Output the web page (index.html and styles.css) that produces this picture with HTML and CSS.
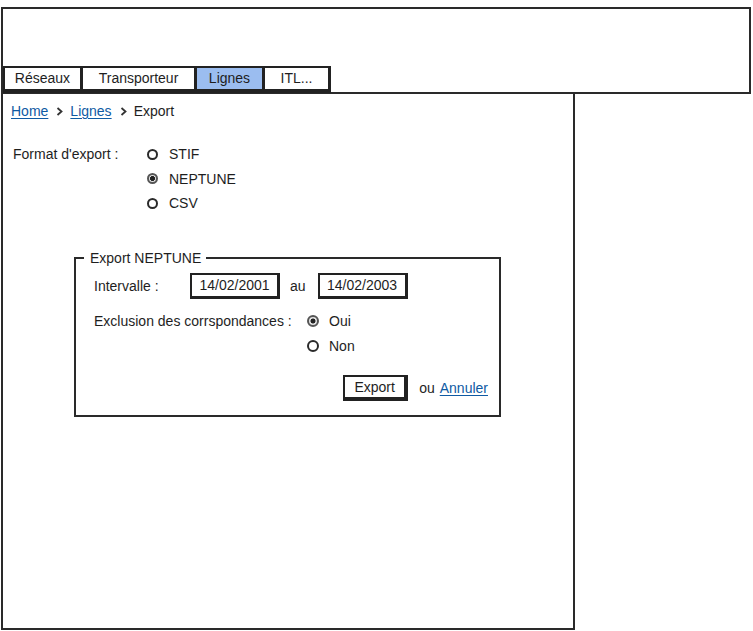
FILE: index.html
```html
<!DOCTYPE html>
<html lang="fr">
<head>
<meta charset="utf-8">
<title>Export NEPTUNE</title>
<link rel="stylesheet" href="styles.css">
</head>
<body>
<header class="top">
  <nav class="tabs">
    <span class="tab tab-w1">Réseaux</span>
    <span class="tab tab-w2">Transporteur</span>
    <span class="tab tab-w3 is-active">Lignes</span>
    <span class="tab tab-w4">ITL...</span>
  </nav>
</header>
<main class="panel">
  <div class="crumbs">
    <a class="link" href="#">Home</a>
    <svg class="chev" width="7" height="9" viewBox="0 0 7 9"><path d="M1.5 1 L5.5 4.5 L1.5 8" fill="none" stroke="#333" stroke-width="1.8"/></svg>
    <a class="link" href="#">Lignes</a>
    <svg class="chev" width="7" height="9" viewBox="0 0 7 9"><path d="M1.5 1 L5.5 4.5 L1.5 8" fill="none" stroke="#333" stroke-width="1.8"/></svg>
    <span>Export</span>
  </div>

  <div class="format">
    <span class="format-label">Format d'export :</span>
    <div class="radios">
      <div class="radio"><span class="dot"></span><span>STIF</span></div>
      <div class="radio"><span class="dot is-on"></span><span>NEPTUNE</span></div>
      <div class="radio"><span class="dot"></span><span>CSV</span></div>
    </div>
  </div>

  <fieldset class="box">
    <legend class="box-title">Export NEPTUNE</legend>
    <div class="row">
      <span class="lbl-int">Intervalle :</span>
      <span class="field">14/02/2001</span>
      <span class="au">au</span>
      <span class="field field-2">14/02/2003</span>
    </div>
    <div class="row row-excl">
      <span class="lbl-excl">Exclusion des corrspondances :</span>
      <div class="radios radios-small">
        <div class="radio"><span class="dot is-on"></span><span>Oui</span></div>
        <div class="radio"><span class="dot"></span><span>Non</span></div>
      </div>
    </div>
    <div class="actions">
      <span class="btn">Export</span>
      <span class="ou">ou</span>
      <a class="link" href="#">Annuler</a>
    </div>
  </fieldset>
</main>
</body>
</html>
```

FILE: styles.css
```css
html, body {
  margin: 0;
  padding: 0;
  background: #ffffff;
}
body {
  font-family: "Liberation Sans", Arial, sans-serif;
  font-size: 14px;
  color: #1e1e1e;
}

.top {
  box-sizing: border-box;
  width: 750px;
  margin: 7px 0 0 1px;
  border: 2px solid #2a2a2a;
  padding-top: 57px;
}
.tabs {
  display: flex;
  margin-bottom: -1px;
}
.tab {
  box-sizing: border-box;
  height: 27px;
  border: 2px solid #222;
  border-bottom-width: 4px;
  margin-right: -1px;
  background: #fff;
  display: flex;
  align-items: center;
  justify-content: center;
  padding-bottom: 1px;
}
.tab:last-child { border-right-width: 3px; }
.tab-w1 { width: 79px; }
.tab-w2 { width: 115px; }
.tab-w3 { width: 69px; }
.tab-w4 { width: 68px; }
.tab.is-active { background: #9bbdf0; }

.panel {
  box-sizing: border-box;
  width: 574px;
  height: 536px;
  margin-left: 1px;
  border: 2px solid #2a2a2a;
  border-top: none;
}

.crumbs {
  display: flex;
  align-items: center;
  height: 16px;
  padding: 9px 0 0 8px;
}
.chev { margin: 1px 7px 0 8px; }
.link {
  color: #0f5aa3;
  text-decoration: underline;
  text-underline-offset: 2px;
}

.format {
  display: flex;
  margin: 23px 0 0 10px;
}
.format-label {
  width: 134px;
  line-height: 24px;
}
.radios { display: flex; flex-direction: column; }
.radio {
  display: flex;
  align-items: center;
  height: 24.5px;
}
.dot {
  box-sizing: border-box;
  width: 11px;
  height: 11px;
  border: 2px solid #2a2a2a;
  border-radius: 50%;
  margin-right: 11px;
  background: #fff;
}
.dot.is-on {
  border-color: #555;
  background: radial-gradient(circle, #222 0 2.2px, #e2e2e2 2.8px);
}

.box {
  box-sizing: border-box;
  width: 427px;
  height: 167px;
  margin: 34px 0 0 71px;
  padding: 0 11px 0 18px;
  border: 2px solid #2a2a2a;
  min-width: 0;
}
.box-title {
  padding: 0 5px 0 6px;
  margin-left: -10px;
  line-height: 16px;
}
.row {
  display: flex;
  align-items: center;
  margin-top: 7px;
}
.lbl-int { width: 96px; }
.field {
  box-sizing: border-box;
  width: 90px;
  height: 26px;
  border: 2px solid #222;
  border-right-width: 3px;
  border-bottom-width: 3px;
  display: flex;
  align-items: center;
  justify-content: center;
}
.field-2 { width: 90px; }
.au { margin: 0 12px 0 10px; }

.row-excl {
  align-items: flex-start;
  margin-top: 10px;
}
.lbl-excl {
  width: 213px;
  line-height: 24px;
}
.radios-small .dot { width: 12px; height: 12px; margin-right: 10px; }
.radios-small .radio { height: 25px; }

.actions {
  display: flex;
  align-items: center;
  justify-content: flex-end;
  margin-top: 16px;
}
.btn {
  box-sizing: border-box;
  width: 65px;
  height: 26px;
  border: 2px solid #222;
  border-right-width: 4px;
  border-bottom-width: 4px;
  display: flex;
  align-items: center;
  justify-content: center;
}
.ou { margin: 0 5px 0 11px; }
```
